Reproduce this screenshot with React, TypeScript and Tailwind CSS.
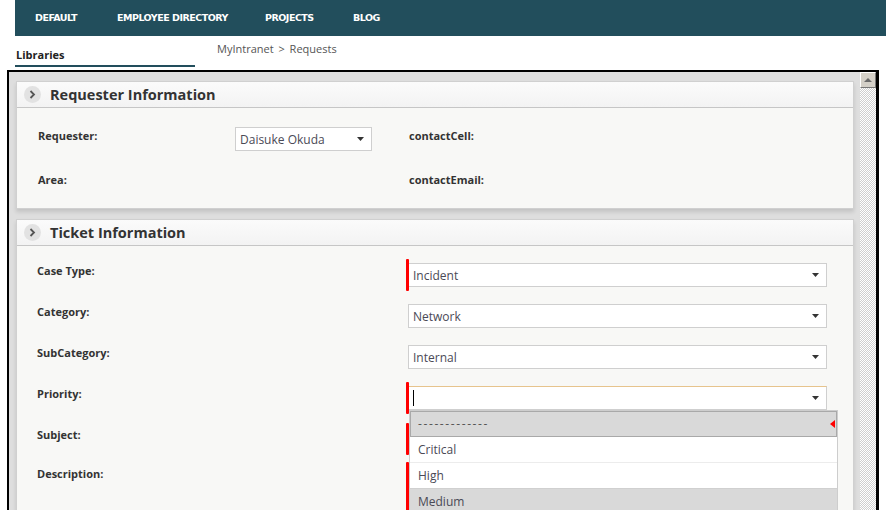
import React from 'react';

const navItems = ['DEFAULT', 'EMPLOYEE DIRECTORY', 'PROJECTS', 'BLOG'];

type FieldProps = {
  label: string;
  value?: string;
  required?: boolean;
  focused?: boolean;
  noSelect?: boolean;
  tall?: boolean;
};

const Caret: React.FC = () => (
  <svg width="7" height="4" viewBox="0 0 7 4" className="shrink-0">
    <path d="M0 0h7L3.5 4z" fill="#333" />
  </svg>
);

const Chevron: React.FC = () => (
  <span className="flex h-[17px] w-[17px] items-center justify-center rounded-full bg-[#e2e2e2]">
    <svg width="7" height="9" viewBox="0 0 7 9">
      <path d="M1.5 1l3.5 3.5L1.5 8" stroke="#555" strokeWidth="1.8" fill="none" />
    </svg>
  </span>
);

const Select: React.FC<{ value?: string; focused?: boolean; className?: string }> = ({ value, focused, className }) => (
  <div
    className={`flex h-[24px] items-center justify-between border border-[#cfcfcf] bg-white pl-[4px] pr-[7px] text-[12px] font-normal text-[#4a4a56] ${
      focused ? 'border-t-[#e7c48d]' : ''
    } ${className ?? ''}`}
  >
    {focused ? <span className="h-[16px] w-px bg-black" /> : <span className="pt-[2px]">{value}</span>}
    <Caret />
  </div>
);

const TicketRow: React.FC<FieldProps> = ({ label, value, required, focused, noSelect, tall }) => (
  <div className={`flex ${tall ? 'h-[80px]' : 'h-[41px]'}`}>
    <div className={`w-[391px] pl-[20px] text-[11px] font-bold leading-[16px] text-[#333] ${tall ? 'pt-[6px]' : 'pt-[8px]'}`}>
      {label}
    </div>
    <div className="relative w-[419px] pt-[8px]">
      {required && (
        <div className={`absolute left-[-2px] w-[3px] rounded-[1px] bg-[#f00] ${tall ? 'top-[2px] h-[70px]' : 'top-[4px] h-[32px]'}`} />
      )}
      {!noSelect && <Select value={value} focused={focused} />}
    </div>
  </div>
);

const Panel: React.FC<{ title: string; children: React.ReactNode; className?: string }> = ({ title, children, className }) => (
  <div className={`border border-[#d0d0d0] bg-[#f8f8f6] shadow-[0_3px_4px_rgba(0,0,0,0.12)] ${className ?? ''}`}>
    <div className="flex h-[26px] items-center gap-[9px] border-b border-[#c6c6c6] bg-gradient-to-b from-[#fbfbfb] to-[#f3f3f3] pl-[7px]">
      <Chevron />
      <span className="text-[14.5px] font-bold text-[#333]">{title}</span>
    </div>
    {children}
  </div>
);

export default function App() {
  return (
    <div className="relative h-[510px] w-[886px] overflow-hidden bg-white font-['Open_Sans',sans-serif]">
      {/* Top nav */}
      <div className="ml-[15px] flex h-[36px] items-center bg-[#224e5c] pl-[20px] font-['DejaVu_Sans',sans-serif] text-[9.5px] font-bold tracking-[-0.5px] text-white">
        <span className="w-[82px]">{navItems[0]}</span>
        <span className="w-[148px]">{navItems[1]}</span>
        <span className="w-[88px]">{navItems[2]}</span>
        <span>{navItems[3]}</span>
      </div>

      {/* Sub header */}
      <div className="flex h-[34px]">
        <div className="ml-[15px] flex h-[31px] w-[180px] items-end border-b-2 border-[#224e5c] pb-[2px] pl-px text-[11px] font-bold text-[#222]">
          Libraries
        </div>
        <div className="ml-[22px] pt-[5px] text-[11px] text-[#555]">
          MyIntranet <span className="mx-[2px]">&gt;</span> Requests
        </div>
      </div>

      {/* Frame */}
      <div className="ml-[7px] flex h-[440px] w-[872px] border-t-2 border-l-2 border-black bg-[#dedede]">
        <div className="flex w-[853px] flex-col gap-[10px] pt-[9px] pl-[7px]">
          <Panel title="Requester Information" className="w-[838px]">
            <div className="h-[100px] text-[11px] font-bold leading-[16px] text-[#333]">
              <div className="flex h-[44px] pt-[17px]">
                <div className="w-[218px] pt-[3px] pl-[21px]">Requester:</div>
                <Select value="Daisuke Okuda" className="mt-[2px] w-[137px]" />
                <div className="pl-[37px] pt-[3px]">contactCell:</div>
              </div>
              <div className="flex h-[44px] pt-[20px]">
                <div className="w-[392px] pl-[21px]">Area:</div>
                <div>contactEmail:</div>
              </div>
            </div>
          </Panel>

          <Panel title="Ticket Information" className="w-[838px]">
            <div className="pt-[9px]">
              <TicketRow label="Case Type:" value="Incident" required />
              <TicketRow label="Category:" value="Network" />
              <TicketRow label="SubCategory:" value="Internal" />
              <TicketRow label="Priority:" required focused />
              <TicketRow label="Subject:" required noSelect />
              <TicketRow label="Description:" required noSelect tall />
            </div>
          </Panel>
        </div>

        {/* Scrollbar */}
        <div className="flex w-[16px] flex-col bg-[repeating-conic-gradient(#cfcfcf_0_25%,#ffffff_0_50%)] bg-[length:2px_2px]">
          <div className="flex h-[16px] items-center justify-center border border-t-white border-l-white border-r-[#777] border-b-[#777] bg-[#d4d0c8]">
            <svg width="8" height="4" viewBox="0 0 8 4">
              <path d="M0 4h8L4 0z" fill="#6b6b6b" />
            </svg>
          </div>
        </div>
        <div className="w-[3px] bg-black" />
      </div>

      {/* Priority dropdown list */}
      <div className="absolute top-[410px] left-[409px] w-[429px] border border-[#cdcdcd] bg-white text-[12px] text-[#4a4a56]">
        <div className="relative flex h-[26px] items-center border border-[#a9a9a9] bg-[#d9d9d9] pl-[7px] tracking-[1.6px] text-[#555]">
          -------------
          <svg width="5" height="8" viewBox="0 0 5 8" className="absolute top-[8px] right-[1px]">
            <path d="M5 0v8L0 4z" fill="#f00" />
          </svg>
        </div>
        <div className="flex h-[26px] items-center border-b border-[#ececec] pl-[8px]">Critical</div>
        <div className="flex h-[26px] items-center border-b border-[#d0d0d0] pl-[8px]">High</div>
        <div className="flex h-[26px] items-center bg-[#d9d9d9] pl-[8px]">Medium</div>
      </div>
    </div>
  );
}
